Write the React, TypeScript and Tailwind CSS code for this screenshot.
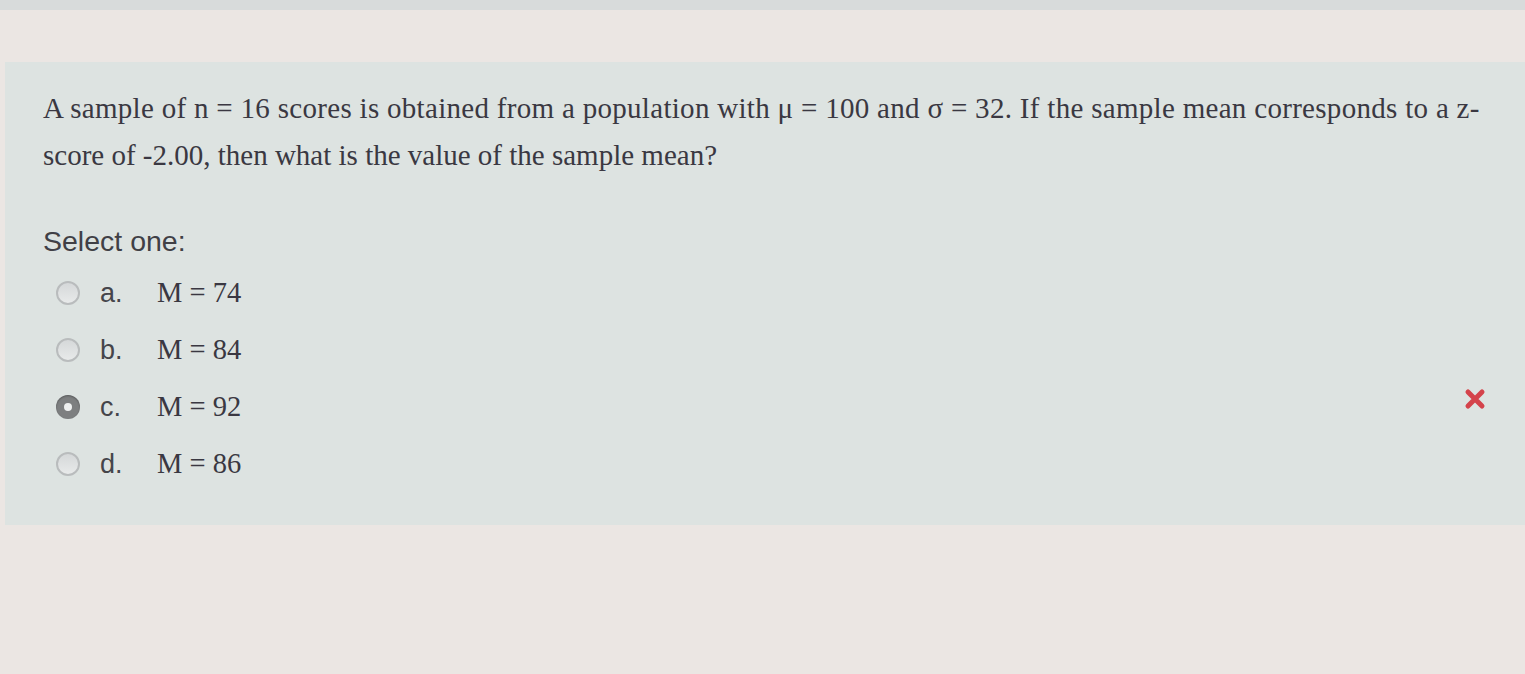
import React from "react";

const options = [
  { l: "a.", v: "M = 74", checked: false },
  { l: "b.", v: "M = 84", checked: false },
  { l: "c.", v: "M = 92", checked: true },
  { l: "d.", v: "M = 86", checked: false },
];

function Radio({ checked }: { checked: boolean }) {
  if (checked) {
    return (
      <div className="w-[24px] h-[24px] rounded-full bg-[#7d7f80] flex items-center justify-center shadow-[inset_0_1px_2px_rgba(0,0,0,0.3)]">
        <div className="w-[8px] h-[8px] rounded-full bg-[#eef0f0]" />
      </div>
    );
  }
  return (
    <div className="w-[24px] h-[24px] rounded-full border-[2px] border-[#b9bcbd] bg-gradient-to-b from-[#d5d8d9] to-[#e8eaea]" />
  );
}

export default function App() {
  return (
    <div className="w-[1525px] h-[674px] bg-[#ebe6e3] overflow-hidden flex flex-col">
      <div className="h-[10px] bg-[#d8dbdb]" />
      <div className="h-[52px]" />
      <div className="ml-[5px] h-[463px] bg-[#dde3e1] pl-[38px] pt-[23px] relative">
        <p
          className="text-[29px] leading-[47px] text-[#3a3842] whitespace-nowrap"
          style={{ fontFamily: '"Liberation Serif", "Times New Roman", serif' }}
        >
          <span className="tracking-[0.3px]">
            A sample of n = 16 scores is obtained from a population with μ = 100 and σ = 32. If the sample mean corresponds to a z-
          </span>
          <br />
          score of -2.00, then what is the value of the sample mean?
        </p>
        <div
          className="mt-[47px] text-[28.5px] leading-[30px] text-[#404046]"
          style={{ fontFamily: '"Liberation Sans", Arial, sans-serif' }}
        >
          Select one:
        </div>
        <div className="mt-[22px] flex flex-col gap-[27px]">
          {options.map((o) => (
            <div key={o.l} className="flex items-center h-[30px]">
              <div className="ml-[13px] w-[24px] flex justify-center">
                <Radio checked={o.checked} />
              </div>
              <span
                className="ml-[20px] w-[57px] text-[27px] text-[#45454a]"
                style={{ fontFamily: '"Liberation Sans", Arial, sans-serif' }}
              >
                {o.l}
              </span>
              <span
                className="text-[28.5px] text-[#3a3842]"
                style={{ fontFamily: '"Liberation Serif", "Times New Roman", serif' }}
              >
                {o.v}
              </span>
            </div>
          ))}
        </div>
        <svg
          className="absolute left-[1459px] top-[326px]"
          width="22"
          height="22"
          viewBox="0 0 22 22"
        >
          <path d="M4 4 L18 18 M18 4 L4 18" stroke="#d4434b" strokeWidth="5" strokeLinecap="round" />
        </svg>
      </div>
    </div>
  );
}
